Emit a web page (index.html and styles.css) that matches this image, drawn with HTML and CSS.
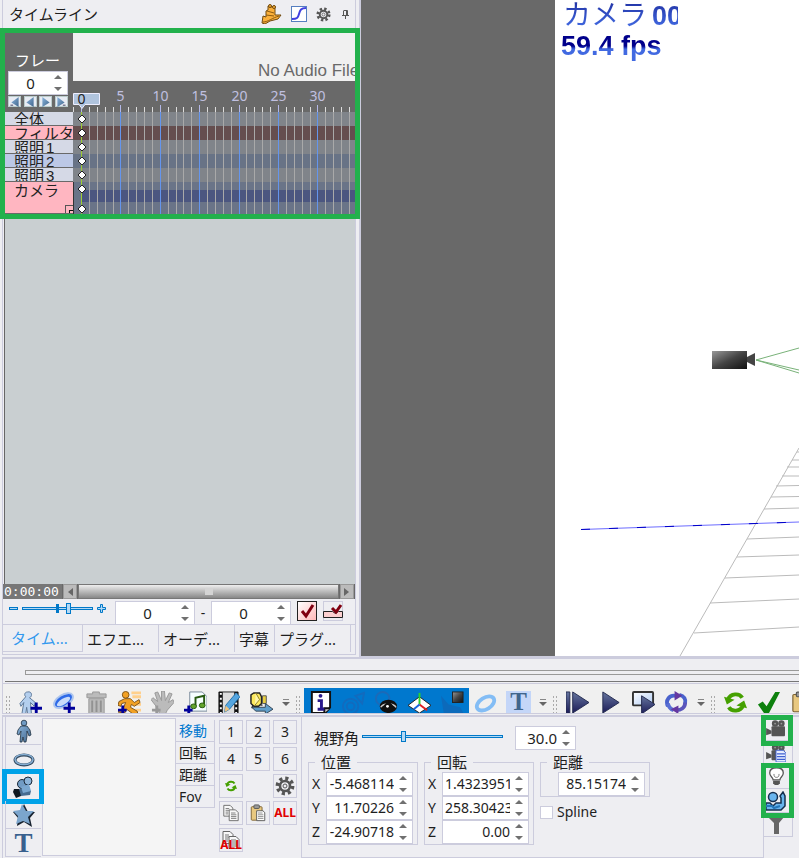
FILE: index.html
```
<!DOCTYPE html>
<html lang="ja">
<head>
<meta charset="utf-8">
<meta name="viewport" content="width=device-width, initial-scale=1">
<title>タイムライン</title>
<link rel="stylesheet" href="styles.css">
</head>
<body>
<svg class="defs" aria-hidden="true">
  <defs>
    <linearGradient id="steel" x1="0" y1="0" x2="1" y2="1"><stop offset="0" stop-color="#8ab4dc"/><stop offset="1" stop-color="#40658c"/></linearGradient>
    <linearGradient id="navy" x1="0" y1="0" x2="0" y2="1"><stop offset="0" stop-color="#66769f"/><stop offset="1" stop-color="#1c1c58"/></linearGradient>
    <linearGradient id="body" x1="0" y1="0" x2="1" y2="1"><stop offset="0" stop-color="#999"/><stop offset=".5" stop-color="#444"/><stop offset="1" stop-color="#111"/></linearGradient>
    <linearGradient id="glass" x1="0" y1="0" x2="1" y2="1"><stop offset="0" stop-color="#fff"/><stop offset="1" stop-color="#b0ccf5"/></linearGradient>
    <symbol id="gear" viewBox="0 0 20 20"><circle cx="10" cy="10" r="7.6" fill="none" stroke="#555" stroke-width="3.6" stroke-dasharray="3.1 2.87"/><circle cx="10" cy="10" r="5" fill="none" stroke="#555" stroke-width="2.6"/><circle cx="10" cy="10" r="2" fill="none" stroke="#555"/></symbol>
    <symbol id="cycle" viewBox="0 0 24 24"><g fill="none" stroke="currentColor" stroke-width="4"><path d="M4 9C7 2 16 2 19 7"/><path d="M20 15C17 22 8 22 5 17"/></g><path fill="currentColor" d="M0 6l3 8 8-5zM24 18l-3-8-8 5z"/></symbol>
    <symbol id="loop" viewBox="0 0 24 24"><g fill="none" stroke-width="4"><path d="M3 16C0 9 5 4 11 5" stroke="#4a62cc"/><path d="M15 4c5 1 7 5 6 9" stroke="#4a62cc"/><path d="M21 12c0 6-5 8-9 8" stroke="#5a55bb"/><path d="M3 13c1 4 3 6 6 7" stroke="#5a70d4"/></g><path fill="#6538a0" d="M10 0l8 5-8 5zM14 24l-8-5 8-4z"/></symbol>
    <symbol id="film" viewBox="0 0 22 20"><g fill="#555"><circle cx="10" cy="4" r="3.6"/><circle cx="17" cy="4" r="3.6"/><rect x="6" y="7" width="15" height="11" rx="1"/><path d="M0 9l6 3v3l-6 2z"/></g><g fill="#999"><circle cx="10" cy="4" r="1"/><circle cx="17" cy="4" r="1"/></g></symbol>
    <symbol id="copy" viewBox="0 0 20 20"><g fill="#f8f8f8" stroke="#666"><path d="M2 1.500h7l3 3v9H2z"/><path d="M8 6.500h7l3 3v9H8z"/></g><path d="M4 5h4M4 7h4M4 9h3M4 11h3M10 10h5M10 12h6M10 14h6M10 16h6" stroke="#777"/></symbol>
    <symbol id="paste" viewBox="0 0 20 20"><rect x="2.500" y="3" width="12" height="15" rx="1" fill="#e8c880" stroke="#7a6030"/><rect x="5.500" y="1" width="6" height="4" rx="1" fill="#999" stroke="#555"/><path d="M8.500 7.500h7l2 2v9h-9z" fill="#fff" stroke="#555"/><path d="M10 10h5M10 12h6M10 14h6M10 16h6" stroke="#888"/></symbol>
  </defs>
</svg>

<div class="app">
  <main class="workspace">
    <section class="dock">
      <div class="dock-panel">
        <header class="dock-head">
          <h1>タイムライン</h1>
          <button class="plain" aria-label="帽子"><svg width="21" height="20" viewBox="0 0 21 20"><path d="M1 19l1-7 3 1V7l2-1 0-4 3 1 4-1 0 9 6 0-3 4-8 2-5 3z" fill="#fbb03b" stroke="#704a10"/><path d="M6 7l7 2M5 11l8 1M2 18c5 0 9-4 16-6" fill="none" stroke="#8a5a12"/><circle cx="9" cy="2" r="1.500" fill="#fbb03b" stroke="#704a10"/><circle cx="13" cy="3" r="1.500" fill="#fbb03b" stroke="#704a10"/></svg></button>
          <button class="plain" aria-label="カーブ"><svg width="16" height="16" viewBox="0 0 16 16"><rect x=".5" y=".5" width="15" height="15" fill="#fff" stroke="#557ec0"/><path d="M1 13c5 0 6-1 7-5s2-6 7-6" fill="none" stroke="#4040e0" stroke-width="2"/></svg></button>
          <button class="plain" aria-label="設定"><svg width="15" height="15"><use href="#gear"/></svg></button>
          <button class="plain pin" aria-label="ピン"><svg width="8" height="9" viewBox="0 0 8 9"><path d="M1.500 .5h4v5M4.500 1v5M0 5.500h7M3.500 6v3M1.500 1v4" fill="none" stroke="#555"/></svg></button>
        </header>

        <section class="timeline">
          <div class="frame-box">
            <label for="frame">フレー</label>
            <div class="spin frame-spin"><input id="frame" value="0"><span class="steps"><button aria-label="増"></button><button aria-label="減"></button></span></div>
            <div class="nav">
              <button aria-label="最初"><svg viewBox="0 0 12 11"><path d="M10 0v11L2 6z" fill="url(#steel)"/><path d="M1 9h3" stroke="#335"/></svg></button>
              <button aria-label="前"><svg viewBox="0 0 12 11"><path d="M10 0v11L2 6z" fill="url(#steel)"/></svg></button>
              <button aria-label="次"><svg viewBox="0 0 12 11"><path d="M2 0v11l8-5z" fill="url(#steel)"/></svg></button>
              <button aria-label="最後"><svg viewBox="0 0 12 11"><path d="M2 0v11l8-5z" fill="url(#steel)"/><path d="M8 9h3" stroke="#335"/></svg></button>
            </div>
          </div>
          <div class="ruler-side">
            <div class="audio">No Audio File</div>
            <svg class="ruler" width="282" height="31" viewBox="0 0 282 31">
              <g id="ticks"></g>
            </svg>
          </div>
          <ul class="labels">
            <li>全体</li><li class="pink">フィルタ</li><li>照明<b>1</b></li><li class="sel">照明<b>2</b></li><li>照明<b>3</b></li>
            <li class="pink tall">カメラ<span class="expander"></span></li>
          </ul>
          <svg class="tracks" width="282" height="102" viewBox="0 0 282 102" shape-rendering="crispEdges">
            <rect width="282" height="102" fill="#80848a"/>
            <rect y="14" width="282" height="14" fill="#654e4f"/>
            <rect y="42" width="282" height="14" fill="#687386"/>
            <rect y="70" width="282" height="32" fill="#6a7488"/>
            <rect x="9" y="78" width="273" height="12" fill="#4b5680"/>
            <g id="grid"></g>
            <path d="M8.500 0v102" stroke="#9acd32"/>
            <path d="M.5 70v32" stroke="#333"/>
            <g id="keys" fill="#fff" stroke="#222" shape-rendering="auto"></g>
          </svg>
        </section>

        <div class="blank"></div>

        <div class="scroll-row">
          <span class="time">0:00:00</span>
          <button aria-label="左"><svg width="6" height="8"><path d="M6 0v8L1 4z" fill="#666"/></svg></button>
          <div class="scroll-thumb"><i></i></div>
          <button aria-label="右"><svg width="6" height="8"><path d="M0 0v8l5-4z" fill="#666"/></svg></button>
        </div>

        <div class="range-row">
          <div class="zoom">
            <button class="plain" aria-label="縮小"><svg width="9" height="9"><rect x=".5" y="3.500" width="8" height="2" fill="#b4d8f4" stroke="#0078c8"/></svg></button>
            <input type="range" aria-label="ズーム" min="0" max="100" value="66">
            <button class="plain" aria-label="拡大"><svg width="9" height="9"><path d="M3.500 .5h2v3h3v2h-3v3h-2v-3h-3v-2h3z" fill="#b4d8f4" stroke="#0078c8"/></svg></button>
          </div>
          <div class="spin range-spin"><input aria-label="開始" value="0"><span class="steps"><button aria-label="増"></button><button aria-label="減"></button></span></div>
          <span class="dash">-</span>
          <div class="spin range-spin"><input aria-label="終了" value="0"><span class="steps"><button aria-label="増"></button><button aria-label="減"></button></span></div>
          <button class="tick-btn on" aria-label="チェック"><svg width="18" height="18"><path d="M4 9l4 5 7-11" fill="none" stroke="#800010" stroke-width="3"/></svg></button>
          <button class="tick-btn" aria-label="範囲"><svg width="20" height="18"><path d="M.5 9.500v6h19v-6h-4l-3 2-3-2z" fill="#fcd0d0" stroke="#222"/><path d="M9 6l4 4 5-7" fill="none" stroke="#800010" stroke-width="3"/></svg></button>
        </div>

        <nav class="tabs">
          <button class="active">タイム...</button><button>エフエ...</button><button>オーデ...</button><button class="short">字幕</button><button>プラグ...</button>
        </nav>
      </div>
    </section>

    <section class="viewport">
      <div class="canvas">
        <div class="hud"><p class="cam">カメラ<b>00</b></p><p class="fps">59.4 fps</p></div>
        <svg class="scene" viewBox="0 0 244 656" preserveAspectRatio="xMinYMin slice">
          <path d="M201 360l43-12M201 360l43 10M201 360l43 13" stroke="#79b279" fill="none"/>
          <rect x="157" y="351" width="35" height="18" fill="url(#body)"/><path d="M192 357l8-4v13l-8-4z" fill="#444"/>
          <path d="M244 448L125 656M242 452h2M237 460h7M232 467h12M227 476h17M221 486l23-.5M216 497l28-.5M209 509l35-1M192 539l52-2M182 557l62-2M170 578l74-3M155 603l89-4M139 633l105-6" stroke="#bbb" fill="none"/>
          <path d="M26 529.500l218-7.500" stroke="#6c6cff"/><path d="M26 529.500l218-7.500" stroke="#0000c8" stroke-dasharray="9 19"/>
        </svg>
      </div>
    </section>
  </main>

  <footer class="bottom">
    <div class="seek"><div class="groove"></div></div>

    <div class="toolbar">
      <i class="grip"></i>
      <button aria-label="モデル追加"><svg viewBox="0 0 24 24"><path d="M9 1c5-1 5 5 2 6l6 5-1 4-4-4 1 12H9l-1-7-1 7H3l2-12-3 4-1-3 6-7C5 4 6 1 9 1z" fill="#b4cfee" stroke="#5c7798"/><path d="M12 18h12M18 12v12" stroke="#00009a" stroke-width="3"/></svg></button>
      <button aria-label="アクセサリ追加"><svg viewBox="0 0 24 24"><ellipse cx="12" cy="10" rx="11" ry="6" transform="rotate(-32 12 10)" fill="#2e6ae8" stroke="#adc5ed" stroke-width="2"/><ellipse cx="12" cy="11" rx="8" ry="3" transform="rotate(-32 12 11)" fill="#c9dcfa"/><path d="M12 18h12M18 12v12" stroke="#00009a" stroke-width="3"/></svg></button>
      <button aria-label="削除"><svg viewBox="0 0 24 24"><path d="M8 3V1h7v2h7v4H2V3zM4 8h16v16H4z" fill="#bbb" stroke="#999"/><path d="M7.500 10v12M12 10v12M16.500 10v12" stroke="#929292" stroke-width="2"/></svg></button>
      <button aria-label="モーション追加"><svg viewBox="0 0 24 24"><path d="M14 2h11M15 6h10M18 14h7M18 20h6" stroke="#ffd08c" stroke-width="3"/><circle cx="8" cy="4" r="3.500" fill="#f2a124" stroke="#7f5518"/><path d="M7 8h6l4 4 5-3 1 3-6 4-3-2-1 3 7 4 1 4h-4l-8-6-2 4-7-1 0-2 5-1 3-7-4 1-1 3-3-1 1-4z" fill="#f2a124" stroke="#7f5518"/><path d="M0 20h9M5 15v9" stroke="#00009a" stroke-width="3"/></svg></button>
      <button aria-label="ポーズ追加"><svg viewBox="0 0 24 24"><path d="M7 18L0 9l2-2 5 4-3-9 3-1 4 9V0h3l1 10 4-8 3 1-4 9 5-3 1 3-7 8-2 4H9z" fill="#bbb" stroke="#999"/><path d="M1 20h9M6 15v9" stroke="#999" stroke-width="3"/></svg></button>
      <button aria-label="音声追加"><svg viewBox="0 0 24 24"><path d="M6 1h13l5 5v15H6z" fill="#f6ffff" stroke="#789"/><path d="M12 16V7l9-2v10" fill="none" stroke="#285b12" stroke-width="2"/><ellipse cx="10" cy="16" rx="3" ry="2.500" fill="#62a52c" stroke="#285b12"/><ellipse cx="19" cy="15" rx="3" ry="2.500" fill="#62a52c" stroke="#285b12"/><path d="M0 20h9M5 15v9" stroke="#00009a" stroke-width="3"/></svg></button>
      <button aria-label="動画編集"><svg viewBox="0 0 24 24"><path d="M2 1h20v23H2z" fill="#ddd" stroke="#222"/><path d="M4 1v23M20 1v23" stroke="#111" stroke-width="4"/><path d="M4 2v22M20 2v22" stroke="#fff" stroke-width="2" stroke-dasharray="2 3"/><path d="M8 22l1-7L20 2l4 4-11 13z" fill="#55a6e0" stroke="#2471a8"/><path d="M8 22l1-7 4 4z" fill="#f2c37c"/></svg></button>
      <button aria-label="音声出力"><svg viewBox="0 0 24 24"><path d="M2 18l2-6 9 3" fill="none" stroke="#333" stroke-width="1.500"/><path d="M1 4l3-2h6l2 4v7l-3 3H4l-3-3z" fill="#fce95e" stroke="#222" stroke-width="1.500"/><path d="M6 2l4 7-5 6" fill="#fff6ab" stroke="#8f7e1e"/><path d="M13 5h4v8h-4z" fill="#e9cf40" stroke="#555"/><path d="M2 17h14v-4l8 6-8 5v-3H6z" fill="#609fca" stroke="#345"/></svg></button>
      <button class="more" aria-label="その他"></button>
      <i class="grip"></i>
      <div class="band">
        <button aria-label="情報"><svg viewBox="0 0 24 24"><path d="M3 1h19v16l-5 6H3z" fill="#fff" stroke="#111" stroke-width="2"/><path d="M16 23v-5h6" fill="#ccc" stroke="#111" stroke-width="2"/><path d="M9 10h4v9M9 19h7" fill="none" stroke="#28188c" stroke-width="3"/><circle cx="12" cy="5" r="2" fill="#28188c"/></svg></button>
        <button aria-label="ボーン"><svg viewBox="0 0 24 24"><g fill="none" stroke="#126bbe" stroke-width="2"><circle cx="9" cy="16" r="8"/><circle cx="9" cy="16" r="4"/><path d="M14 5l9-3-2 11z"/></g></svg></button>
        <button aria-label="表示"><svg viewBox="0 0 24 24"><circle cx="8" cy="8" r="7" fill="none" stroke="#1c6ab8" stroke-width="2"/><ellipse cx="14" cy="16" rx="9" ry="7" fill="#111"/><path d="M6 17c2-4 13-5 16 0" fill="none" stroke="#ccc" stroke-width="1.500"/><circle cx="14" cy="17" r="5" fill="#111"/><circle cx="13" cy="16" r="1.500" fill="#fff"/></svg></button>
        <button aria-label="座標軸"><svg viewBox="0 0 24 24"><path d="M0 15l12-9 12 9-12 8z" fill="#fff" stroke="#222"/><path d="M12 2v12" stroke="#2bd32b" stroke-width="2"/><path d="M12 14l8 6" stroke="#e02020" stroke-width="2"/><path d="M12 14l-6 5" stroke="#1768e0" stroke-width="2"/></svg></button>
        <button aria-label="影"><svg viewBox="0 0 24 24"><path d="M0 5l8 9 12 3 4 7H3z" fill="#0c6abb"/><rect x="12" y="1" width="11" height="11" fill="url(#body)" stroke="#222"/></svg></button>
      </div>
      <button aria-label="リング"><svg viewBox="0 0 24 24"><ellipse cx="12" cy="13" rx="10" ry="6" transform="rotate(-32 12 13)" fill="none" stroke="#83bdf5" stroke-width="4"/></svg></button>
      <button class="text-tool" aria-label="文字"><span>T</span></button>
      <button class="more" aria-label="その他"></button>
      <i class="grip"></i>
      <button aria-label="コマ送り"><svg viewBox="0 0 24 24"><path d="M0 1h4v22H0zM7 1l17 11L7 23z" fill="url(#navy)" stroke="#252c50"/></svg></button>
      <button aria-label="再生"><svg viewBox="0 0 24 24"><path d="M4 1l17 11L4 23z" fill="url(#navy)" stroke="#252c50"/></svg></button>
      <button aria-label="画面再生"><svg viewBox="0 0 24 24"><rect x="1" y="1" width="21" height="14" rx="1" fill="url(#glass)" stroke="#333" stroke-width="2"/><path d="M10 5l14 9-14 10z" fill="url(#navy)" stroke="#252c50"/></svg></button>
      <button aria-label="ループ"><svg><use href="#loop"/></svg></button>
      <button class="more" aria-label="その他"></button>
      <i class="grip"></i>
      <button class="green" aria-label="更新"><svg><use href="#cycle"/></svg></button>
      <button aria-label="確定"><svg viewBox="0 0 24 24"><path d="M1 14l5-3 4 5L19 1h5L12 24H8z" fill="#0d800d"/></svg></button>
      <button aria-label="貼り付け"><svg viewBox="0 0 20 20"><use href="#paste"/></svg></button>
    </div>

    <div class="controls">
      <nav class="kinds">
        <button aria-label="モデル"><svg viewBox="0 0 24 24"><circle cx="12" cy="4" r="2.800" fill="#6f9ac4" stroke="#234" stroke-width=".8"/><path d="M9 7h6l3 4 1 5-2 1-2-5v5l-1 6h-2l-1-5-1 5H8l1-11-2 4-2-1 1-4z" fill="url(#steel)" stroke="#234" stroke-width=".8"/></svg></button>
        <button aria-label="アクセサリ"><svg viewBox="0 0 24 24"><ellipse cx="12" cy="13" rx="9" ry="5" fill="none" stroke="#30475d" stroke-width="3"/><ellipse cx="12" cy="12.500" rx="9" ry="5" fill="none" stroke="#86aed4" stroke-width="1.500"/></svg></button>
        <button class="current" aria-label="カメラ"><svg viewBox="0 0 24 24"><path d="M2 14l5 0 3 2-1 5-5 2-3-6z" fill="#101820"/><path d="M7 14l8-3 4 5-1 4-9 1z" fill="#476b90"/><circle cx="10" cy="9" r="4.500" fill="#719bc4" stroke="#1a2838"/><circle cx="16" cy="6" r="4" fill="#8eb5db" stroke="#1a2838"/><path d="M9 12l8-3 2 7-8 2z" fill="#7ba7d0"/></svg></button>
        <button aria-label="エフェクト"><svg viewBox="0 0 24 24"><path d="M12 1l4 8 7 0-5 6 2 9-8-5-7 4 1-8-5-6 8-1z" fill="#17222f"/><path d="M10 1l4 7 8 0-6 6 2 7-7-3-7 3 2-8-5-5 7-1z" fill="#7ba5cd"/></svg></button>
        <button class="serif" aria-label="文字"><span>T</span></button>
      </nav>
      <div class="listbox"></div>
      <nav class="modes"><button class="active">移動</button><button>回転</button><button>距離</button><button>Fov</button></nav>
      <div class="pads">
        <button>1</button><button>2</button><button>3</button>
        <button>4</button><button>5</button><button>6</button>
        <button class="green" aria-label="更新"><svg width="12" height="12"><use href="#cycle"/></svg></button><i></i><button aria-label="設定"><svg width="20" height="20"><use href="#gear"/></svg></button>
        <button aria-label="コピー"><svg width="18" height="18"><use href="#copy"/></svg></button><button aria-label="貼り付け"><svg width="18" height="18"><use href="#paste"/></svg></button><button class="all">ALL</button>
        <button class="copy-all"><svg width="22" height="20"><use href="#copy"/></svg><span class="all">ALL</span></button>
      </div>

      <section class="params">
        <div class="fov">
          <label for="fov">視野角</label>
          <input id="fov" type="range" min="0" max="100" value="29">
          <div class="spin fov-spin"><input aria-label="視野角の値" value="30.0"><span class="steps"><button aria-label="増"></button><button aria-label="減"></button></span></div>
        </div>
        <div class="groups">
          <fieldset><legend>位置</legend>
            <div class="field"><label for="px">X</label><div class="spin"><input id="px" value="-5.468114"><span class="steps"><button aria-label="増"></button><button aria-label="減"></button></span></div></div>
            <div class="field"><label for="py">Y</label><div class="spin"><input id="py" value="11.70226"><span class="steps"><button aria-label="増"></button><button aria-label="減"></button></span></div></div>
            <div class="field"><label for="pz">Z</label><div class="spin"><input id="pz" value="-24.90718"><span class="steps"><button aria-label="増"></button><button aria-label="減"></button></span></div></div>
          </fieldset>
          <fieldset><legend>回転</legend>
            <div class="field"><label for="rx">X</label><div class="spin"><input id="rx" class="long" value="1.4323951"><span class="steps"><button aria-label="増"></button><button aria-label="減"></button></span></div></div>
            <div class="field"><label for="ry">Y</label><div class="spin"><input id="ry" class="long" value="258.30423"><span class="steps"><button aria-label="増"></button><button aria-label="減"></button></span></div></div>
            <div class="field"><label for="rz">Z</label><div class="spin"><input id="rz" value="0.00"><span class="steps"><button aria-label="増"></button><button aria-label="減"></button></span></div></div>
          </fieldset>
          <div class="distance">
            <fieldset><legend>距離</legend>
              <div class="field"><label></label><div class="spin"><input aria-label="距離" value="85.15174"><span class="steps"><button aria-label="増"></button><button aria-label="減"></button></span></div></div>
            </fieldset>
            <label class="check"><input type="checkbox">Spline</label>
          </div>
        </div>
      </section>

      <nav class="side">
        <button aria-label="カメラ"><svg width="20" height="18"><use href="#film"/></svg></button>
        <button aria-label="カメラ一覧"><svg width="20" height="18" viewBox="0 0 22 20"><use href="#film"/><path d="M11 7h8l3 3v10H11z" fill="#e6ecff" stroke="#4060d0"/><path d="M12 11h9M12 14h9M12 17h9" stroke="#4060d0" stroke-width="1.500"/></svg></button>
        <button aria-label="照明"><svg width="17" height="19" viewBox="0 0 20 22"><path d="M6 15c0-3-4-4-4-8C2 2 5 .7 10 .7S18 2 18 7c0 4-4 5-4 8z" fill="#fff" stroke="#555" stroke-width="1.500"/><path d="M7 8c0 3 1 4 3 4s3-1 3-4" fill="none" stroke="#666"/><path d="M6 16h8v3l-2 2H8l-2-2z" fill="#555"/></svg></button>
        <button aria-label="人物"><svg width="20" height="20" viewBox="0 0 20 20"><circle cx="7" cy="6" r="4.500" fill="#69b4ed" stroke="#152f4e" stroke-width="1.500"/><path d="M0 12h4l3 3 3-3h5V7l-1-2 3-4 2 4v10l-4 4H0z" fill="#69b4ed" stroke="#152f4e" stroke-width="1.500"/><path d="M0 15h6l2 2 6-2" fill="none" stroke="#2476b8" stroke-width="2"/></svg></button>
        <button aria-label="フィルタ"><svg width="16" height="18" viewBox="0 0 16 18"><path d="M0 1h16l-5 6v11H6V7z" fill="#666"/></svg></button>
        <i class="mark mark-camera"></i><i class="mark mark-light"></i>
      </nav>
    </div>
  </footer>
</div>
<script src="timeline.js"></script>
</body>
</html>
```
FILE: timeline.js
```
const NS = 'http://www.w3.org/2000/svg';
function add(parent, name, attrs, text) {
  const el = document.createElementNS(NS, name);
  for (const key in attrs) el.setAttribute(key, attrs[key]);
  if (text !== undefined) el.textContent = text;
  parent.appendChild(el);
  return el;
}
const ticks = document.getElementById('ticks');
const grid = document.getElementById('grid');
const keys = document.getElementById('keys');
const frameX = n => Math.round(8 + n * 7.88) + 0.5;

// Frame lines and ruler ticks, every fifth frame is labelled
for (let n = -1; n < 35; n++) {
  const x = frameX(n);
  const major = n % 5 === 0;
  add(ticks, 'path', { d: `M${x} ${major ? 24 : 26}V31`, stroke: major ? '#b4b8e8' : '#ddd' });
  if (n > 0) add(grid, 'path', { d: `M${x} 0V102`, stroke: major ? '#6495ed' : '#a9a9a9' });
  if (major && n > 0) add(ticks, 'text', { x, y: 20, class: 'tick-label' }, n);
}
// Current frame marker
add(ticks, 'path', { d: 'M.5 12.5h26v11H12l-3 4-3-4H.5z', fill: '#b0c4de', stroke: '#eef' });
add(ticks, 'text', { x: 8.5, y: 23, class: 'tick-label now' }, 0);
// Key frames
for (const y of [7, 21, 35, 49, 63, 77, 97]) {
  add(keys, 'path', { d: `M9 ${y - 4}l4 4-4 4-4-4z` });
}
```
FILE: styles.css
```
* { box-sizing: border-box; }
:root {
  --line: #ccccdd;
  --panel: #eeeef2;
  --dark: #696969;
  --mark: #22b14c;
  --ink: #1e1e1e;
}
body {
  margin: 0;
  background: var(--panel);
  color: var(--ink);
  font: 14px/20px "Noto Sans", "Noto Sans CJK JP", sans-serif;
  overflow: hidden;
}
button, input { font: inherit; color: inherit; margin: 0; padding: 0; border: 0; background: none; border-radius: 0; min-width: 0; }
button { display: flex; align-items: center; justify-content: center; white-space: nowrap; }
h1, p, ul { margin: 0; padding: 0; font-weight: 400; }
svg { display: block; flex: none; }
.defs { position: absolute; width: 0; height: 0; }
.app { height: 100vh; display: grid; grid-template-rows: minmax(0, 1fr) auto; }
.workspace { display: grid; grid-template-columns: 361px minmax(0, 1fr); min-height: 0; }

/* Timeline dock */
.dock { display: flex; padding-bottom: 2px; border-right: 2px solid var(--line); min-height: 0; }
.dock-panel { flex: 1; display: flex; flex-direction: column; min-width: 0; margin-right: 3px; border: solid var(--line); border-width: 0 1px 1px; margin-left: 2px; }
.dock-head { flex: none; height: 28px; display: flex; align-items: center; gap: 9px; padding: 0 5px 0 6px; }
.dock-head h1 { flex: 1; font-size: 15px; }
.pin { margin-left: 2px; }

.timeline {
  flex: none; display: grid; grid-template-columns: 68px minmax(0, 1fr);
  margin: 0 -5px 0 -3px; border: 5px solid var(--mark); height: 191px; overflow: hidden; position: relative;
}
.frame-box { background: var(--dark); height: 79px; padding: 17px 5px 0 3px; overflow: hidden; }
.frame-box label { display: block; color: #fff; font-size: 15px; padding-left: 7px; height: 21px; }
.nav { display: flex; justify-content: space-between; margin-top: 1px; }
.nav button { width: 13px; height: 11px; background: #e8ecf4; border: 1px solid #bcc; }
.nav svg { width: 12px; height: 10px; }
.ruler-side { background: var(--dark); min-width: 0; }
.audio { height: 48px; background: #f0f0f0; color: var(--dark); font: 17px/20px "Liberation Sans", sans-serif; padding: 28px 0 0 185px; white-space: nowrap; overflow: hidden; }
.tick-label { font: 14px "Noto Sans", sans-serif; fill: #c0c0e0; text-anchor: middle; }
.tick-label.now { fill: #222; }
.labels { list-style: none; background: var(--dark); }
.labels li { height: 14px; border-bottom: 1px solid var(--dark); background: #d5d9e6; font-size: 15px; line-height: 14px; padding-left: 9px; overflow: hidden; white-space: nowrap; color: #222; }
.labels b { font: 15px/14px "Liberation Sans", sans-serif; margin-left: 2px; }
.labels .pink { background: #ffb6c1; }
.labels .sel { background: #bcc8e6; }
.labels .tall { height: 32px; position: relative; line-height: 16px; }
.expander { position: absolute; right: 0; bottom: 0; width: 8px; height: 8px; border: 1px solid #555; border-width: 1px 0 0 1px; }
.expander::after { content: ""; position: absolute; left: 3px; top: 4px; width: 8px; height: 6px; border: 1px solid #111; }

.blank { flex: 1; background: #c9cfd1; margin-left: 1px; border-left: 1px solid #666; }
.scroll-row { flex: none; height: 15px; display: flex; background: var(--dark); gap: 1px; padding-right: 1px; }
.time { background: #777; color: #fff; font: 13px/16px "DejaVu Sans Mono", monospace; width: 59px; padding-left: 1px; }
.scroll-row button { width: 14px; background: #bbb; border: 1px solid #999; }
.scroll-thumb { flex: 1; display: grid; place-items: center; background: linear-gradient(#eee, #888); border: 1px solid #777; }
.scroll-thumb i { width: 8px; height: 7px; background: #d4d4d4; }

.range-row { flex: none; height: 26px; display: flex; align-items: flex-start; padding: 2px 0 0 6px; border-bottom: 1px solid var(--line); }
.zoom { display: flex; width: 97px; gap: 4px; align-items: center; height: 15px; margin-right: 9px; }
.range-spin { width: 80px; }
.dash { width: 16px; text-align: center; line-height: 24px; }
.tick-btn { width: 20px; height: 20px; margin-left: 6px; border: 1px solid var(--line); }
.tick-btn.on { border-color: #222; background: linear-gradient(135deg, #fff, #ffb8b8); }
.tabs { flex: none; height: 29px; display: flex; }
.tabs button { flex: 0 1 76px; height: 27px; border: solid var(--line); border-width: 0 1px 0 0; font-size: 15px; justify-content: flex-start; padding-left: 4px; }
.tabs .short { flex-basis: 40px; }
.tabs .active { flex-basis: 80px; padding-left: 8px; color: #3399ee; border-bottom-width: 1px; }

/* Shared spin box */
.spin { display: flex; height: 24px; background: #fff; border: 1px solid var(--line); min-width: 0; }
.spin input { flex: 1; width: 0; text-align: right; outline: 0; font-size: 14px; }
.steps { width: 18px; display: flex; flex-direction: column; justify-content: space-between; align-items: center; padding: 3px 0; }
.steps button { border: solid transparent; border-width: 0 4px 4px; border-bottom-color: #707070; width: 8px; height: 4px; }
.steps button + button { border-width: 4px 4px 0; border-top-color: #707070; }
.frame-spin input, .range-spin input { text-align: center; padding-left: 3px; font-size: 15px; }

/* Sliders */
input[type="range"] { appearance: none; height: 12px; flex: 1; background: linear-gradient(#b4d8f4, #b4d8f4) 50% 50% / calc(100% - 2px) 1px no-repeat, linear-gradient(#0078c8, #0078c8) 0 50% / 100% 3px no-repeat; }
input[type="range"]::-webkit-slider-thumb { appearance: none; width: 5px; height: 11px; background: #b4d8f4; border: 1px solid #0078c8; }
.zoom input { background: linear-gradient(#0078c8, #0078c8) 50% 50% / 3px 9px no-repeat, linear-gradient(#b4d8f4, #b4d8f4) 50% 50% / calc(100% - 2px) 1px no-repeat, linear-gradient(#0078c8, #0078c8) 0 50% / 100% 3px no-repeat; }

/* 3D view */
.viewport { background: var(--dark); display: flex; min-width: 0; min-height: 0; border-bottom: 1px solid var(--line); padding-left: 194px; }
.canvas { flex: 1; position: relative; background: #fff; overflow: hidden; }
.scene { width: 100%; height: 100%; }
.hud { position: absolute; left: 6px; top: 0; }
.hud p { color: transparent; -webkit-background-clip: text; background-clip: text; white-space: nowrap; overflow: hidden; }
.hud .cam { width: 117px; height: 30px; padding-left: 2px; font: 28px/26px "Noto Sans CJK JP", sans-serif; background-image: linear-gradient(#2336a8 10%, #4169e1 90%); }
.hud .cam b { font: bold 27px/26px "Liberation Sans", sans-serif; margin-left: 5px; }
.hud .fps { height: 32px; font: bold 27px/32px "Liberation Sans", sans-serif; background-image: linear-gradient(#00008b 50%, #4169e1 60%); }

/* Seek bar and toolbar */
.bottom { min-width: 0; margin-left: 2px; }
.seek { height: 27px; border: solid var(--line); border-width: 2px 0 1px 1px; padding: 11px 0 0 2px; }
.groove { height: 12px; border-bottom: 1px solid #777; }
.groove::before { content: ""; display: block; height: 3px; margin-left: 20px; border: 1px solid #999; border-right: 0; }
.toolbar { height: 30px; display: flex; overflow: hidden; background: #f0f0f0; border: solid var(--line); border-width: 0 0 1px 1px; padding-left: 1px; }
.toolbar > button, .band button { flex: none; width: 33px; height: 22px; margin-top: 7px; }
.toolbar button svg { width: 23px; height: 23px; }
.toolbar .grip { flex: none; width: 10px; height: 18px; margin-top: 11px; background: radial-gradient(circle, #aaa 1px, transparent 1px) 1px 0 / 3px 4px; background-clip: content-box; padding: 0 3px 0 1px; }
.band { display: flex; flex: none; background: #0078ce; margin-top: 4px; }
.band button { margin-top: 3px; }
.toolbar .more { width: 16px; }
.more::before { content: ""; border: solid transparent; border-width: 4px 4px 0; border-top-color: #666; margin-top: 4px; box-shadow: 0 -3px 0 -1px #f0f0f0, 0 -4px 0 -1px #888; }
.text-tool span, .serif span { font: bold 25px/22px "Liberation Serif", serif; color: #40658c; }
.text-tool span { width: 25px; background: #c4d6f8; text-align: center; }
.green { color: #45a000; }

/* Control panel */
.controls { height: 143px; display: flex; margin-top: 1px; border-top: 2px solid var(--line); border-left: 1px solid var(--line); }
.kinds { width: 36px; margin-left: 2px; display: flex; flex-direction: column; }
.kinds button { height: 28px; border: solid var(--line); border-width: 0 0 1px 1px; position: relative; }
.kinds svg { width: 24px; height: 24px; }
.kinds .current::after { content: ""; position: absolute; left: -4px; right: -3px; top: -4px; bottom: -4px; border: 5px solid #00a2e8; }
.kinds .serif span { font-size: 27px; color: #38608e; }
.listbox { width: 134px; height: 138px; margin-top: 1px; background: #f5f5f5; border: 1px solid var(--line); margin-left: 1px; }
.modes { width: 39px; padding-top: 3px; }
.modes button { width: 39px; height: 22px; justify-content: flex-start; padding-left: 3px; border: solid var(--line); border-width: 0 1px 1px 0; font-size: 14px; }
.modes .active { color: #0078d0; }
.pads { display: grid; grid-template-columns: repeat(3, 24px); grid-auto-rows: 24px; gap: 3px; padding: 3px 4px 0; align-content: start; }
.pads button { border: 1px solid var(--line); position: relative; }
.pads .all { color: #e00000; font-weight: 700; font-size: 12px; line-height: 12px; }
.copy-all .all { position: absolute; bottom: 0; }

.params { flex: 1; min-width: 0; border: solid var(--line); border-width: 0 1px 1px; padding: 7px 6px 0; }
.fov { display: flex; align-items: center; height: 28px; padding-left: 6px; }
.fov label { font-size: 15px; width: 48px; }
.fov input[type="range"] { flex: 0 1 141px; margin-bottom: 4px; }
.fov-spin { width: 61px; margin-left: 12px; }
.fov-spin input { font-size: 15px; }
.groups { display: flex; gap: 6px; }
fieldset { width: 110px; margin: 0; padding: 0 4px 0 3px; border: 1px solid var(--line); min-width: 0; }
legend { margin-left: 3px; padding: 0 6px; font-size: 15px; line-height: 20px; }
.field { display: flex; }
.field label { width: 14px; line-height: 24px; }
.field .spin { flex: 1; padding-left: 2px; }
.field .long { text-align: left; }
.check { display: flex; align-items: center; gap: 4px; margin-top: 5px; }
.check input { appearance: none; width: 13px; height: 13px; background: #fff; border: 1px solid var(--line); }

.side { flex: none; width: 29px; position: relative; margin-right: 6px; }
.side button { width: 29px; height: 24px; border: solid var(--line); border-width: 0 1px 1px 0; padding-right: 4px; }
.mark { position: absolute; left: -3px; border: 5px solid var(--mark); }
.mark-camera { top: -2px; width: 32px; height: 31px; }
.mark-light { top: 46px; width: 33px; height: 55px; }
```
